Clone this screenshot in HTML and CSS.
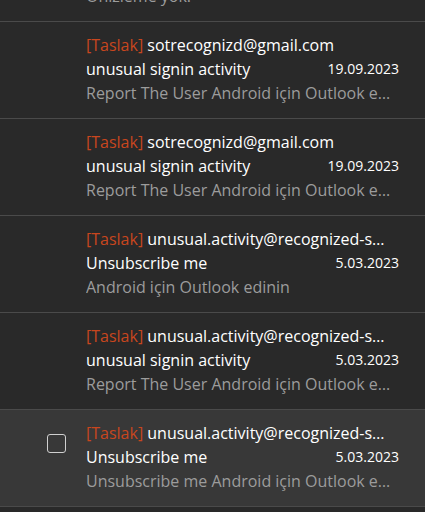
FILE: index.html
```html
<!DOCTYPE html>
<html>
<head>
	<title>Taslaklar</title>
	<link rel="stylesheet" href="styles.css">
</head>
<body>
	<div class="list">
		<div class="mail">
			<div class="body">
				<div class="from"><span class="draft">[Taslak]</span> unusual.activity@recognized-senders.com</div>
				<div class="line"><span class="subject">Unsubscribe me</span><span class="date">5.03.2023</span></div>
				<div class="preview">Önizleme yok.</div>
			</div>
		</div>
		<div class="mail">
			<div class="body">
				<div class="from"><span class="draft">[Taslak]</span> sotrecognizd@gmail.com</div>
				<div class="line"><span class="subject">unusual signin activity</span><span class="date">19.09.2023</span></div>
				<div class="preview">Report The User Android için Outlook edinin</div>
			</div>
		</div>
		<div class="mail">
			<div class="body">
				<div class="from"><span class="draft">[Taslak]</span> sotrecognizd@gmail.com</div>
				<div class="line"><span class="subject">unusual signin activity</span><span class="date">19.09.2023</span></div>
				<div class="preview">Report The User Android için Outlook edinin</div>
			</div>
		</div>
		<div class="mail">
			<div class="body">
				<div class="from"><span class="draft">[Taslak]</span> unusual.activity@recognized-senders.com</div>
				<div class="line"><span class="subject">Unsubscribe me</span><span class="date">5.03.2023</span></div>
				<div class="preview">Android için Outlook edinin</div>
			</div>
		</div>
		<div class="mail">
			<div class="body">
				<div class="from"><span class="draft">[Taslak]</span> unusual.activity@recognized-senders.com</div>
				<div class="line"><span class="subject">unusual signin activity</span><span class="date">5.03.2023</span></div>
				<div class="preview">Report The User Android için Outlook edinin</div>
			</div>
		</div>
		<div class="mail selected">
			<div class="check"></div>
			<div class="body">
				<div class="from"><span class="draft">[Taslak]</span> unusual.activity@recognized-senders.com</div>
				<div class="line"><span class="subject">Unsubscribe me</span><span class="date">5.03.2023</span></div>
				<div class="preview">Unsubscribe me Android için Outlook edinin</div>
			</div>
		</div>
		<div class="mail"></div>
	</div>
</body>
</html>
```

FILE: styles.css
```css
* {
	box-sizing: border-box;
}
html, body {
	margin: 0;
	height: 100%;
	overflow: hidden;
	background-color: #292929;
}
body {
	font-family: "Open Sans", sans-serif;
	color: #ffffff;
}
.list {
	margin-top: -75px;
}
.mail {
	height: 97px;
	border-bottom: 1px solid #4a4a4a;
	display: flex;
	padding: 11px 26px 0 86px;
	position: relative;
}
.mail.selected {
	background-color: #383838;
}
.check {
	position: absolute;
	left: 47px;
	top: 24px;
	width: 19px;
	height: 19px;
	border: 1.5px solid #d0d0d0;
	border-radius: 3px;
}
.body {
	flex: 1;
	min-width: 0;
}
.from, .line, .preview {
	height: 24px;
	line-height: 24px;
	font-size: 16px;
	white-space: nowrap;
	overflow: hidden;
	text-overflow: ellipsis;
}
.from {
	padding-right: 12px;
}
.draft {
	color: #c8461e;
}
.line {
	display: flex;
	justify-content: space-between;
}
.date {
	font-size: 14px;
}
.preview {
	color: #9c9c9c;
}
```
